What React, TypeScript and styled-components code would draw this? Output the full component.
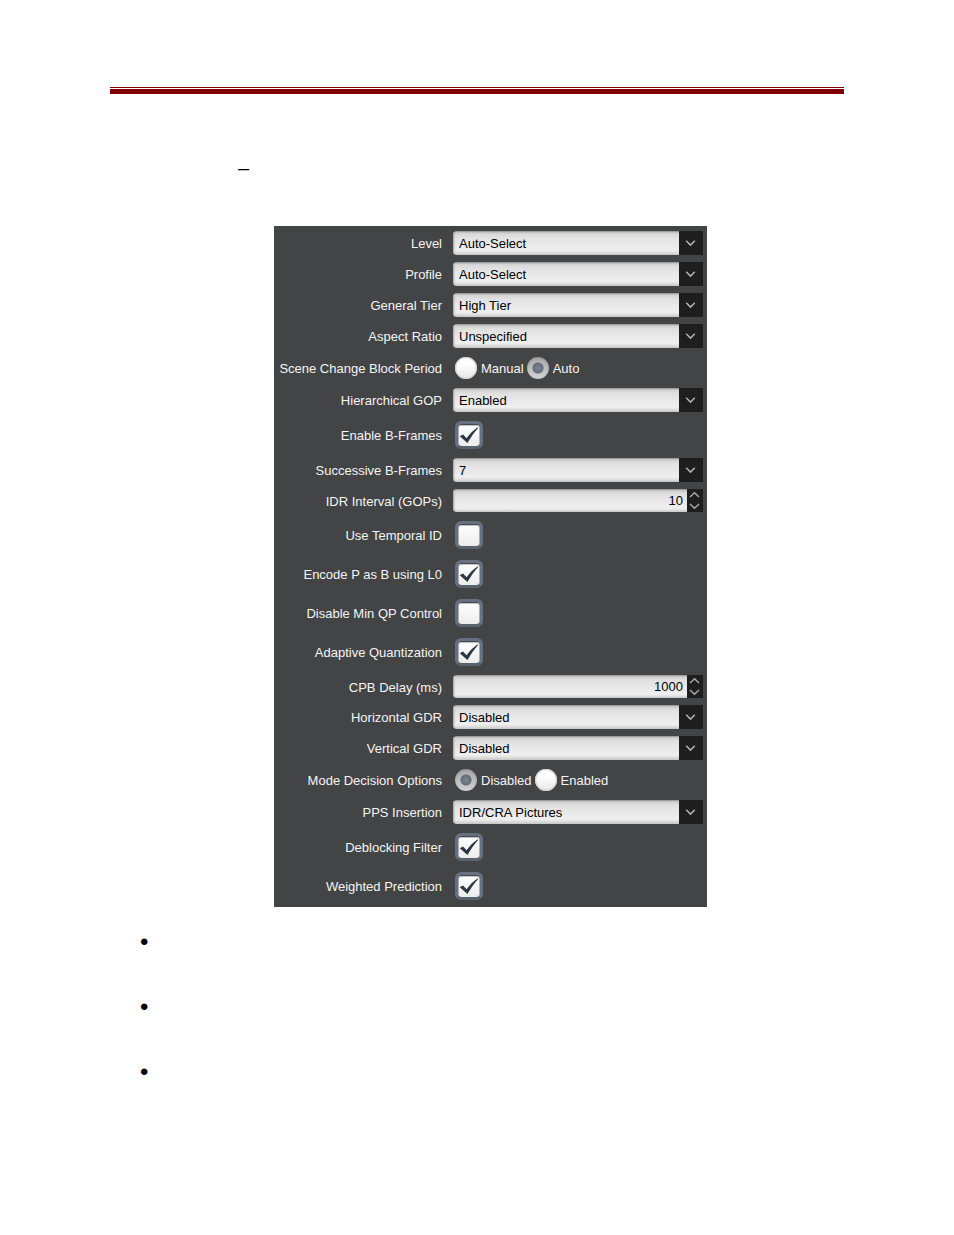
import React, { useId, useState } from "react";
import styled, { createGlobalStyle } from "styled-components";

const GlobalStyle = createGlobalStyle`
  *, *::before, *::after { box-sizing: border-box; }
  body {
    margin: 0;
    background: #fff;
    color: #000;
    font-family: "Liberation Sans", Arial, sans-serif;
  }
`;

const Page = styled.main`
  padding: 87px 110px 64px;
`;

const HeaderRule = styled.header`
  height: 7px;
  border-top: 1px solid #800000;
  border-bottom: 5px solid #800000;
`;

const Heading = styled.h1`
  margin: 63px 0 47px 128px;
  font-size: 20px;
  line-height: 22px;
  font-weight: 400;
`;

const Figure = styled.div`
  display: flex;
  justify-content: center;
  padding-left: 27px;
`;

const Panel = styled.form`
  width: 100%;
  max-width: 433px;
  padding: 1px 4px 2px 0;
  background: #434446;
  color: #f4f4f4;
  font-size: 13px;
  line-height: 16px;
`;

const Row = styled.div<{ $pad: string }>`
  display: grid;
  grid-template-columns: 168px minmax(0, 1fr);
  column-gap: 11px;
  align-items: center;
  padding: ${(p) => p.$pad};
`;

const RowLabel = styled.label`
  padding-top: 2px;
  text-align: right;
  white-space: nowrap;
`;

const fieldFace = `
  appearance: none;
  width: 100%;
  min-width: 0;
  margin: 0;
  border: 0;
  color: #000;
  font: inherit;
  background: linear-gradient(#8c8c8c 0, #b4b4b4 1px, #cfcfcf 2px, #dcdcdc 4px, #e2e2e2 7px, #efefef 19px, #eaeaea 20px, #c8c8c8 100%);
  box-shadow: inset 2px 0 2px -1px #a0a0a0;
`;

const SelectBox = styled.div`
  display: grid;
  grid-template-columns: minmax(0, 1fr) 24px;
  height: 24px;
  border-radius: 4px 0 0 4px;
  overflow: hidden;
`;

const SelectInput = styled.select`
  ${fieldFace}
  grid-area: 1 / 1 / 2 / 3;
  height: 24px;
  padding: 2px 28px 0 6px;
`;

const ArrowBox = styled.span`
  grid-area: 1 / 2 / 2 / 3;
  display: flex;
  align-items: center;
  justify-content: center;
  background: #1e1e1e;
  pointer-events: none;
`;

const SpinBox = styled.div`
  display: grid;
  grid-template-columns: minmax(0, 1fr) 16px;
  height: 23px;
  border-radius: 4px 0 0 4px;
  overflow: hidden;
`;

const SpinInput = styled.input`
  ${fieldFace}
  height: 23px;
  padding: 0 4px;
  text-align: right;
`;

const SpinButtons = styled.div`
  display: flex;
  flex-direction: column;
  background: #1e1e1e;
`;

const SpinButton = styled.button`
  flex: 1;
  display: flex;
  align-items: center;
  justify-content: center;
  padding: 0;
  border: 0;
  background: transparent;
`;

const CheckBox = styled.span`
  display: grid;
  width: 28px;
  height: 28px;
  margin-left: 2px;
`;

const CheckInput = styled.input`
  appearance: none;
  grid-area: 1 / 1;
  width: 28px;
  height: 28px;
  margin: 0;
  border: 3px solid #667080;
  border-bottom-color: #59636f;
  border-radius: 6px;
  background: linear-gradient(#fff, #ececec) padding-box;
  box-shadow: inset 0 1px 0 #44474c, inset 1px 0 0 #aaaeb4, inset -1px 0 0 #aaaeb4, inset 0 2px 1px #c0c0c0;
`;

const CheckMark = styled.svg`
  grid-area: 1 / 1;
  pointer-events: none;
`;

const RadioGroup = styled.div`
  display: flex;
  align-items: center;
  padding-left: 2px;
`;

const RadioLabel = styled.label`
  display: flex;
  align-items: center;
  gap: 4px;
  height: 22px;
  padding-right: 3px;
`;

const RadioText = styled.span`
  padding-top: 2px;
`;

const RadioInput = styled.input`
  appearance: none;
  width: 22px;
  height: 22px;
  margin: 0;
  border-radius: 50%;
  background: linear-gradient(#fff 30%, #e6e6e6);
  box-shadow: inset 0 0 1px 1px #cfcfcf;

  &:checked {
    background:
      radial-gradient(circle at 50% 50%, #7d8896 0, #6c7785 3px, #626d7a 5px, transparent 6px),
      linear-gradient(#a8a8a8, #d2d2d2);
    box-shadow: inset 0 1px 2px #8e8e8e;
  }
`;

const Notes = styled.ul`
  margin: 23px 0 0;
  padding: 0 0 0 30px;
  list-style: none;
`;

const Note = styled.li`
  height: 65px;
  font-size: 24px;
  line-height: 24px;
`;

function Chevron({ up = false }: { up?: boolean }) {
  return (
    <svg width="12" height="8" viewBox="0 0 12 8" fill="none" stroke="#a8a8a8" strokeWidth="1.5" aria-hidden="true">
      <path d={up ? "M1 6 5.5 1.8 10 6" : "M1 2 5.5 6.2 10 2"} />
    </svg>
  );
}

function SelectRow({ label, value }: { label: string; value: string }) {
  const id = useId();
  return (
    <Row $pad="4px 0 3px">
      <RowLabel htmlFor={id}>{label}</RowLabel>
      <SelectBox>
        <SelectInput id={id} defaultValue={value}>
          <option>{value}</option>
        </SelectInput>
        <ArrowBox>
          <svg width="12" height="8" viewBox="0 0 12 8" fill="none" stroke="#b4b4b4" strokeWidth="1.5" aria-hidden="true">
            <path d="M1.2 1.8 5.5 6.1 9.8 1.8" />
          </svg>
        </ArrowBox>
      </SelectBox>
    </Row>
  );
}

function SpinRow({ label, value }: { label: string; value: number }) {
  const id = useId();
  const [count, setCount] = useState(value);
  return (
    <Row $pad="4px 0 3px">
      <RowLabel htmlFor={id}>{label}</RowLabel>
      <SpinBox>
        <SpinInput
          id={id}
          inputMode="numeric"
          value={count}
          onChange={(e) => setCount(Number(e.target.value) || 0)}
        />
        <SpinButtons>
          <SpinButton type="button" aria-label={`Increase ${label}`} onClick={() => setCount(count + 1)}>
            <Chevron up />
          </SpinButton>
          <SpinButton type="button" aria-label={`Decrease ${label}`} onClick={() => setCount(count - 1)}>
            <Chevron />
          </SpinButton>
        </SpinButtons>
      </SpinBox>
    </Row>
  );
}

function CheckRow({ label, on }: { label: string; on: boolean }) {
  const id = useId();
  const [checked, setChecked] = useState(on);
  return (
    <Row $pad="6px 0 5px">
      <RowLabel htmlFor={id}>{label}</RowLabel>
      <CheckBox>
        <CheckInput id={id} type="checkbox" checked={checked} onChange={() => setChecked(!checked)} />
        {checked && (
          <CheckMark width="28" height="28" viewBox="0 0 28 28" aria-hidden="true">
            <path d="M4.8 15.2 8 13.6 11.6 17.2C14.6 13 18.2 9.2 22.8 6.2L23 7.2C19.2 11.4 15.8 16.2 12.4 22Z" fill="#2b3642" />
          </CheckMark>
        )}
      </CheckBox>
    </Row>
  );
}

function RadioRow({ label, options, value }: { label: string; options: string[]; value: string }) {
  const id = useId();
  return (
    <Row $pad="6px 0 5px">
      <RowLabel as="span" id={id}>{label}</RowLabel>
      <RadioGroup role="radiogroup" aria-labelledby={id}>
        {options.map((option) => (
          <RadioLabel key={option}>
            <RadioInput type="radio" name={id} defaultChecked={option === value} />
            <RadioText>{option}</RadioText>
          </RadioLabel>
        ))}
      </RadioGroup>
    </Row>
  );
}

export default function App() {
  return (
    <>
      <GlobalStyle />
      <Page>
        <HeaderRule />
        <Heading>–</Heading>
        <Figure>
          <Panel>
            <SelectRow label="Level" value="Auto-Select" />
            <SelectRow label="Profile" value="Auto-Select" />
            <SelectRow label="General Tier" value="High Tier" />
            <SelectRow label="Aspect Ratio" value="Unspecified" />
            <RadioRow label="Scene Change Block Period" options={["Manual", "Auto"]} value="Auto" />
            <SelectRow label="Hierarchical GOP" value="Enabled" />
            <CheckRow label="Enable B-Frames" on />
            <SelectRow label="Successive B-Frames" value="7" />
            <SpinRow label="IDR Interval (GOPs)" value={10} />
            <CheckRow label="Use Temporal ID" on={false} />
            <CheckRow label="Encode P as B using L0" on />
            <CheckRow label="Disable Min QP Control" on={false} />
            <CheckRow label="Adaptive Quantization" on />
            <SpinRow label="CPB Delay (ms)" value={1000} />
            <SelectRow label="Horizontal GDR" value="Disabled" />
            <SelectRow label="Vertical GDR" value="Disabled" />
            <RadioRow label="Mode Decision Options" options={["Disabled", "Enabled"]} value="Disabled" />
            <SelectRow label="PPS Insertion" value="IDR/CRA Pictures" />
            <CheckRow label="Deblocking Filter" on />
            <CheckRow label="Weighted Prediction" on />
          </Panel>
        </Figure>
        <Notes>
          <Note>•</Note>
          <Note>•</Note>
          <Note>•</Note>
        </Notes>
      </Page>
    </>
  );
}
